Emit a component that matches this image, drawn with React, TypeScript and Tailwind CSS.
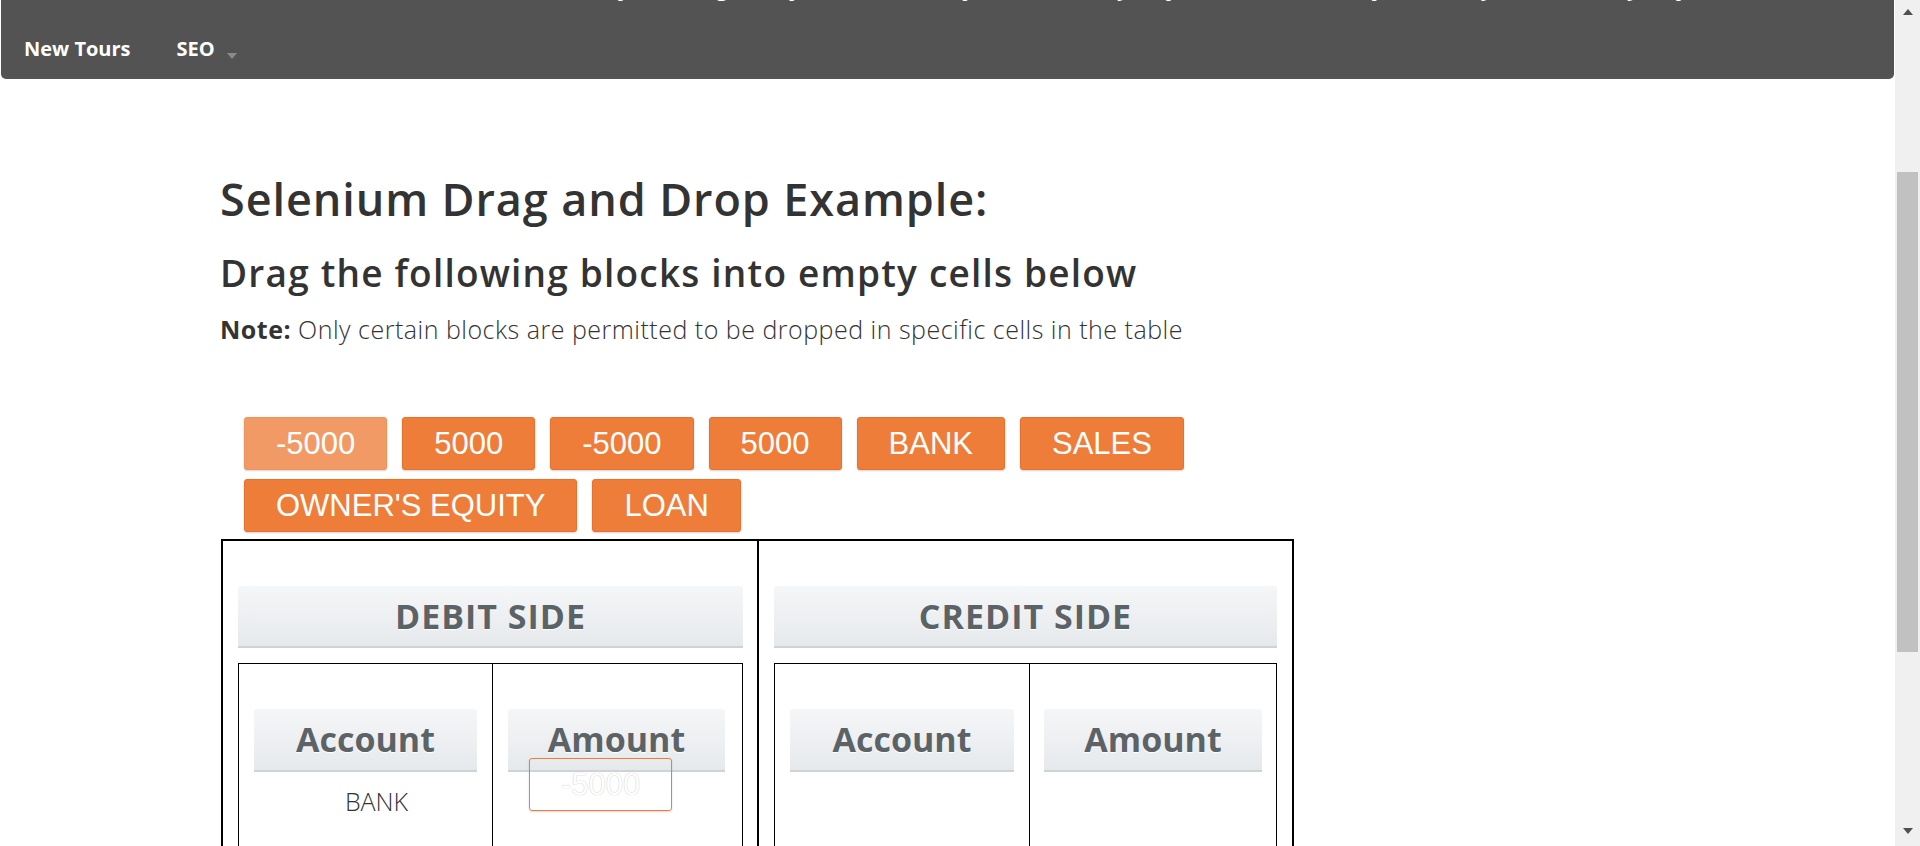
import React from "react";

const row1 = [
  { t: "-5000", light: true },
  { t: "5000" },
  { t: "-5000" },
  { t: "5000" },
  { t: "BANK" },
  { t: "SALES" },
  { t: "OWNER'S EQUITY" },
  { t: "LOAN" },
];

const topItems = [
  "Insurance Project",
  "Agile Project",
  "Bank Project",
  "Security Project",
  "Telecom Project",
  "Payment Gateway Project",
];

function Block({ label, light }: { label: string; light?: boolean }) {
  return (
    <div
      className={
        light
          ? "h-[53px] px-[31px] flex items-center rounded-[3px] border border-[#f0925a] bg-[#f29a66] text-white text-[31px] leading-none font-['Liberation_Sans',Arial,sans-serif] shadow-[0_1px_2px_rgba(0,0,0,0.18)]"
          : "h-[53px] px-[31px] flex items-center rounded-[3px] border border-[#e8712d] bg-[#ef7d3a] text-white text-[31px] leading-none font-['Liberation_Sans',Arial,sans-serif] shadow-[0_1px_2px_rgba(0,0,0,0.18)]"
      }
    >
      {label}
    </div>
  );
}

function SideHeader({ label }: { label: string }) {
  return (
    <div className="h-[62px] rounded-t-[3px] border-b-2 border-[#cfd3d6] bg-linear-to-b from-[#f5f6f8] to-[#e6e9ec] flex items-center justify-center text-[34px] font-bold tracking-[1px] text-[#5b6367] [text-shadow:0_1px_1px_#ffffff]">
      {label}
    </div>
  );
}

function ColHeader({ label }: { label: string }) {
  return (
    <div className="h-[63px] rounded-t-[3px] border-b-2 border-[#cfd3d6] bg-linear-to-b from-[#f5f6f8] to-[#e6e9ec] flex items-center justify-center text-[34px] font-bold text-[#5b6367] [text-shadow:0_1px_1px_#ffffff]">
      {label}
    </div>
  );
}

export default function App() {
  return (
    <div className="flex h-[846px] w-[1920px] overflow-hidden bg-white font-['Open_Sans',sans-serif] text-[#333333]">
      <div className="flex-1 min-w-0 flex flex-col">
        {/* Navbar */}
        <nav className="mx-[1px] h-[79px] shrink-0 rounded-b-[5px] bg-[#535353] overflow-hidden text-white text-[20px] font-bold">
          <div className="-mt-[21px] h-[21px] leading-[20px] flex pl-[457px] whitespace-nowrap">
            {topItems.map((t) => (
              <span key={t} className="px-[23px]">
                {t}
              </span>
            ))}
          </div>
          <div className="pt-[39px] flex leading-[20px] whitespace-nowrap">
            <span className="px-[23px]">New Tours</span>
            <span className="pl-[23px] flex items-start">
              SEO
              <span className="ml-[12px] mt-[14px] w-0 h-0 border-l-[5px] border-r-[5px] border-t-[6px] border-l-transparent border-r-transparent border-t-[#8a8a8a]" />
            </span>
          </div>
        </nav>

        {/* Main content */}
        <main className="pl-[220px] pt-[95px]">
          <h1 className="text-[45px] leading-[50px] font-semibold tracking-[0.9px] text-[#333333]">
            Selenium Drag and Drop Example:
          </h1>
          <h3 className="mt-[28px] text-[37px] leading-[42px] font-semibold tracking-[1.2px] text-[#333333]">
            Drag the following blocks into empty cells below
          </h3>
          <p className="mt-[20px] text-[25px] leading-[30px] font-light text-[#333333] tracking-[0.5px]">
            <span className="font-bold">Note:</span> Only certain blocks are permitted to be dropped in specific cells in the table
          </p>

          <div className="mt-[73px] ml-[24px] w-[1050px] flex flex-wrap gap-x-[15px] gap-y-[9px]">
            {row1.map((b, i) => (
              <Block key={i} label={b.t} light={b.light} />
            ))}
          </div>

          {/* Table */}
          <div className="ml-[1px] mt-[7px] w-[1073px] border-2 border-black flex">
            <div className="w-[536px] shrink-0 border-r-2 border-black pl-[15px] pr-[14px] pt-[45px]">
              <SideHeader label="DEBIT SIDE" />
              <div className="mt-[15px] border border-black flex h-[400px]">
                <div className="w-[254px] shrink-0 border-r border-black px-[15px] pt-[45px]">
                  <ColHeader label="Account" />
                  <div className="mt-[14px] pl-[22px] text-center text-[25px] leading-[30px] font-light text-[#333333]">
                    BANK
                  </div>
                </div>
                <div className="relative flex-1 pl-[15px] pr-[17px] pt-[45px]">
                  <ColHeader label="Amount" />
                  <div className="absolute left-[36px] top-[94px] w-[143px] h-[53px] rounded-[3px] border border-[#ef7d3a] flex items-center justify-center text-[31px] leading-none text-white font-['Liberation_Sans',Arial,sans-serif] [text-shadow:0_0_1px_#b0b0b0] shadow-[0_1px_2px_rgba(0,0,0,0.15)]">
                    -5000
                  </div>
                </div>
              </div>
            </div>
            <div className="flex-1 px-[15px] pt-[45px]">
              <SideHeader label="CREDIT SIDE" />
              <div className="mt-[15px] border border-black flex h-[400px]">
                <div className="w-[255px] shrink-0 border-r border-black px-[15px] pt-[45px]">
                  <ColHeader label="Account" />
                </div>
                <div className="flex-1 px-[14px] pt-[45px]">
                  <ColHeader label="Amount" />
                </div>
              </div>
            </div>
          </div>
        </main>
      </div>

      {/* Scrollbar */}
      <div className="w-[25px] h-full shrink-0 bg-[#f0f0f0] flex flex-col items-center">
        <div className="mt-[9px] w-0 h-0 border-l-[5px] border-r-[5px] border-b-[6px] border-l-transparent border-r-transparent border-b-[#505050]" />
        <div className="mt-[157px] w-[21px] h-[480px] bg-[#c1c1c1]" />
        <div className="mt-auto mb-[12px] w-0 h-0 border-l-[5px] border-r-[5px] border-t-[6px] border-l-transparent border-r-transparent border-t-[#505050]" />
      </div>
    </div>
  );
}
